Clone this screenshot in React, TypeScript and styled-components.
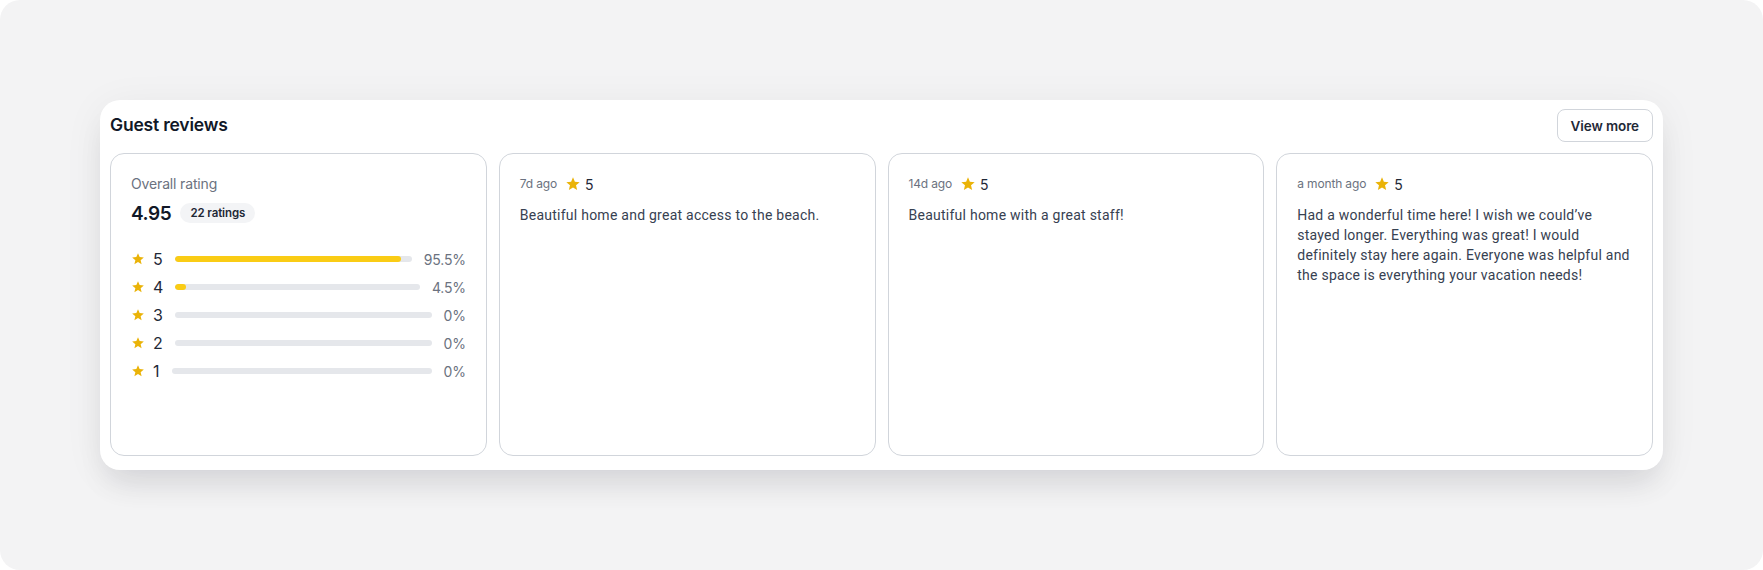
import React from "react";
import styled, { createGlobalStyle } from "styled-components";

const GlobalStyle = createGlobalStyle`
  html, body { margin: 0; padding: 0; background: #ffffff; }
  body { font-family: Inter, "Noto Sans", Arial, sans-serif; -webkit-font-smoothing: antialiased; }
  * { box-sizing: border-box; }
`;

const Page = styled.div`
  width: 1763px;
  height: 570px;
  background: #f3f3f4;
  border-radius: 20px;
  padding: 100px 100px 0 100px;
`;

const Card = styled.section`
  background: #ffffff;
  border-radius: 20px;
  padding: 9px 10px 14px 10px;
  box-shadow: 0 20px 30px -8px rgba(17, 24, 39, 0.1), 0 6px 40px rgba(17, 24, 39, 0.06);
`;

const Header = styled.div`
  display: flex;
  align-items: center;
  justify-content: space-between;
  margin-bottom: 11px;
`;

const Title = styled.h2`
  margin: 0 0 3px 0;
  font-size: 17.5px;
  font-weight: 600;
  color: #111827;
  letter-spacing: -0.2px;
`;

const Button = styled.button`
  height: 33px;
  padding: 0 13px;
  border: 1px solid #d1d5db;
  border-radius: 8px;
  background: #ffffff;
  font-family: inherit;
  font-size: 13.5px;
  font-weight: 600;
  color: #1f2937;
  letter-spacing: -0.1px;
  cursor: pointer;
`;

const Grid = styled.div`
  display: grid;
  grid-template-columns: repeat(4, 1fr);
  gap: 12px;
`;

const Panel = styled.div`
  height: 303px;
  border: 1px solid #d1d5db;
  border-radius: 14px;
  padding: 20px;
`;

const Muted = styled.div<{ $size?: number }>`
  font-size: ${(p) => p.$size ?? 14}px;
  line-height: 20px;
  color: #6b7280;
  letter-spacing: -0.15px;
`;

const ScoreRow = styled.div`
  display: flex;
  align-items: center;
  gap: 9px;
  margin-top: 5px;
  height: 28px;
`;

const Score = styled.span`
  font-size: 19px;
  font-weight: 600;
  color: #111827;
  letter-spacing: -0.4px;
`;

const Badge = styled.span`
  display: inline-flex;
  align-items: center;
  height: 20px;
  padding: 0 10px;
  border-radius: 999px;
  background: #f3f4f6;
  font-size: 11.5px;
  font-weight: 600;
  color: #1f2937;
  letter-spacing: -0.1px;
`;

const Bars = styled.div`
  display: flex;
  flex-direction: column;
  gap: 8px;
  margin-top: 22px;
`;

const BarRow = styled.div`
  display: flex;
  align-items: center;
  gap: 12px;
  height: 20px;
`;

const Level = styled.span`
  display: flex;
  align-items: center;
  gap: 8px;
  font-size: 16px;
  color: #1f2937;
`;

const Track = styled.div`
  flex: 1;
  height: 6px;
  border-radius: 999px;
  background: #e5e7eb;
  overflow: hidden;
`;

const Fill = styled.div`
  height: 100%;
  border-radius: 999px;
  background: #facc15;
`;

const Percent = styled.span`
  font-size: 14px;
  color: #6b7280;
  letter-spacing: -0.2px;
`;

const Meta = styled.div`
  display: flex;
  align-items: center;
  gap: 8px;
  height: 20px;
`;

const Stars = styled.span`
  display: inline-flex;
  align-items: center;
  gap: 4px;
  font-size: 14px;
  color: #1f2937;
`;

const Body = styled.p`
  margin: 11px 0 0 0;
  font-family: Roboto, Inter, Arial, sans-serif;
  font-size: 14px;
  line-height: 20px;
  color: #374151;
  letter-spacing: 0.25px;
`;

const StarIcon = ({ size }: { size: number }) => (
  <svg width={size} height={size} viewBox="0 0 24 24" aria-hidden="true">
    <path
      fill="#eab308"
      d="M12 17.27L18.18 21l-1.64-7.03L22 9.24l-7.19-.61L12 2 9.19 8.63 2 9.24l5.46 4.73L5.82 21z"
    />
  </svg>
);

const distribution = [
  { stars: 5, pct: 95.5, label: "95.5%" },
  { stars: 4, pct: 4.5, label: "4.5%" },
  { stars: 3, pct: 0, label: "0%" },
  { stars: 2, pct: 0, label: "0%" },
  { stars: 1, pct: 0, label: "0%" },
];

const reviews = [
  { when: "7d ago", rating: 5, text: "Beautiful home and great access to the beach." },
  { when: "14d ago", rating: 5, text: "Beautiful home with a great staff!" },
  {
    when: "a month ago",
    rating: 5,
    text:
      "Had a wonderful time here! I wish we could\u2019ve stayed longer. Everything was great! I would definitely stay here again. Everyone was helpful and the space is everything your vacation needs!",
  },
];

export default function App() {
  return (
    <>
      <GlobalStyle />
      <Page>
        <Card>
          <Header>
            <Title>Guest reviews</Title>
            <Button>View more</Button>
          </Header>
          <Grid>
            <Panel>
              <Muted>Overall rating</Muted>
              <ScoreRow>
                <Score>4.95</Score>
                <Badge>22 ratings</Badge>
              </ScoreRow>
              <Bars>
                {distribution.map((d) => (
                  <BarRow key={d.stars}>
                    <Level>
                      <StarIcon size={14} />
                      {d.stars}
                    </Level>
                    <Track>
                      <Fill style={{ width: `${d.pct}%` }} />
                    </Track>
                    <Percent>{d.label}</Percent>
                  </BarRow>
                ))}
              </Bars>
            </Panel>
            {reviews.map((r) => (
              <Panel key={r.when}>
                <Meta>
                  <Muted $size={12}>{r.when}</Muted>
                  <Stars>
                    <StarIcon size={16} />
                    {r.rating}
                  </Stars>
                </Meta>
                <Body>{r.text}</Body>
              </Panel>
            ))}
          </Grid>
        </Card>
      </Page>
    </>
  );
}
